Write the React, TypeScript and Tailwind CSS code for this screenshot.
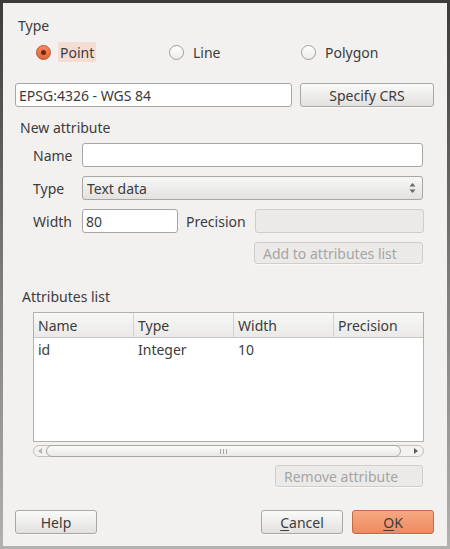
const font = { fontFamily: "'Noto Sans', 'DejaVu Sans', sans-serif" };

function Radio({ label, checked }: { label: string; checked?: boolean }) {
  return (
    <div className="flex items-center">
      {checked ? (
        <span className="flex h-[15px] w-[15px] items-center justify-center rounded-full border border-[#b8532c] bg-linear-to-b from-[#f48a5c] to-[#e5643a]">
          <span className="h-[5px] w-[5px] rounded-full bg-[#6b2a12]" />
        </span>
      ) : (
        <span className="h-[15px] w-[15px] rounded-full border border-[#a19f9b] bg-linear-to-b from-[#ffffff] to-[#ecebea]" />
      )}
      <span
        className={
          "ml-[7px] flex h-[20px] items-center px-[2px] " +
          (checked ? "bg-[#f5ddd3]" : "")
        }
      >
        {label}
      </span>
    </div>
  );
}

function Button({
  children,
  className = "",
  disabled,
  primary,
}: {
  children: React.ReactNode;
  className?: string;
  disabled?: boolean;
  primary?: boolean;
}) {
  let look =
    "justify-center border-[#a9a7a3] bg-linear-to-b from-[#fafaf9] to-[#e2e1df] text-[#3c3c3c]";
  if (disabled) look = "justify-start pl-[8px] border-[#d0cecb] bg-[#ebeae9] text-[#a6a5a2]";
  if (primary)
    look = "justify-center border-[#c66a45] bg-linear-to-b from-[#f6a882] to-[#ee8a60] text-[#3c3c3c]";
  return (
    <div
      className={
        "flex items-center rounded-[3px] border shadow-[0_1px_0_rgba(255,255,255,0.6)] " +
        look +
        " " +
        className
      }
    >
      {children}
    </div>
  );
}

function Input({ value, className = "", disabled }: { value?: string; className?: string; disabled?: boolean }) {
  return (
    <div
      className={
        "flex h-[24px] items-center rounded-[3px] border px-[3px] " +
        (disabled
          ? "border-[#cfcdca] bg-[#ebeae9]"
          : "border-[#a9a7a3] bg-white") +
        " " +
        className
      }
    >
      {value}
    </div>
  );
}

export default function App() {
  return (
    <div
      className="h-[549px] w-[450px] bg-linear-to-b from-[#3c3b37] via-[#7d7b77] to-[#b3b1ad] p-[3px] text-[14px] text-[#3c3c3c]"
      style={font}
    >
      <div className="flex h-full flex-col bg-[#f2f1f0] pl-[12px] pr-[13px]">
        {/* Type */}
        <div className="mt-[14px] ml-[3px] h-[18px] leading-[18px]">Type</div>
        <div className="mt-[7px] flex h-[20px] items-center">
          <div className="ml-[21px] w-[133px]">
            <Radio label="Point" checked />
          </div>
          <div className="w-[132px]">
            <Radio label="Line" />
          </div>
          <Radio label="Polygon" />
        </div>

        {/* CRS */}
        <div className="mt-[21px] flex h-[24px] gap-[8px]">
          <Input value="EPSG:4326 - WGS 84" className="w-[277px]" />
          <Button className="h-[24px] w-[134px]">Specify CRS</Button>
        </div>

        {/* New attribute */}
        <div className="mt-[12px] ml-[5px] h-[18px] leading-[18px]">New attribute</div>
        <div className="mt-[6px] flex h-[24px] items-center">
          <div className="ml-[18px] w-[49px]">Name</div>
          <Input className="w-[341px]" />
        </div>
        <div className="mt-[9px] flex h-[24px] items-center">
          <div className="ml-[18px] w-[49px]">Type</div>
          <div className="flex h-[24px] w-[341px] items-center justify-between rounded-[3px] border border-[#a9a7a3] bg-linear-to-b from-[#f7f7f6] to-[#e3e2e0] pl-[4px] pr-[6px]">
            <span>Text data</span>
            <svg width="7" height="12" viewBox="0 0 7 12">
              <path d="M3.5 1 L6.5 4.5 H0.5 Z" fill="#6a6966" />
              <path d="M3.5 11 L6.5 7.5 H0.5 Z" fill="#6a6966" />
            </svg>
          </div>
        </div>
        <div className="mt-[9px] flex h-[24px] items-center">
          <div className="ml-[18px] w-[49px]">Width</div>
          <Input value="80" className="w-[96px]" />
          <div className="ml-[8px] w-[69px]">Precision</div>
          <Input disabled className="w-[169px]" />
        </div>
        <div className="mt-[9px] flex justify-end pr-[11px]">
          <Button disabled className="h-[22px] w-[169px]">
            Add to attributes list
          </Button>
        </div>

        {/* Attributes list */}
        <div className="mt-[24px] ml-[7px] h-[18px] leading-[18px]">Attributes list</div>
        <div className="mt-[6px] ml-[18px] mr-[10px] flex h-[130px] flex-col border border-[#b3b1ad] bg-white">
          <div className="flex h-[25px] border-b border-[#c9c7c3] bg-linear-to-b from-[#f8f8f7] to-[#eae9e7]">
            {["Name", "Type", "Width", "Precision"].map((h, i) => (
              <div
                key={h}
                className={
                  "flex items-center px-[4px] " +
                  (i < 3 ? "w-[100px] border-r border-[#d4d2ce]" : "flex-1")
                }
              >
                {h}
              </div>
            ))}
          </div>
          <div className="flex h-[22px] items-center">
            <div className="w-[100px] px-[4px]">id</div>
            <div className="w-[100px] px-[4px]">Integer</div>
            <div className="w-[100px] px-[4px]">10</div>
          </div>
        </div>

        {/* scrollbar */}
        <div className="mt-[3px] ml-[18px] mr-[10px] flex h-[12px] items-center rounded-full border border-[#c3c1bd] bg-[#f3f2f1]">
          <div className="flex w-[12px] justify-center">
            <svg width="4" height="6" viewBox="0 0 4 6">
              <path d="M0 3 L4 0 V6 Z" fill="#b8b6b2" />
            </svg>
          </div>
          <div className="flex h-[12px] w-[355px] items-center justify-center rounded-full border border-[#a9a7a3] bg-linear-to-b from-[#fcfcfb] to-[#e9e8e6]">
            <svg width="7" height="5" viewBox="0 0 7 5">
              <path d="M0.5 0 V5 M3.5 0 V5 M6.5 0 V5" stroke="#a9a7a3" strokeWidth="1" />
            </svg>
          </div>
          <div className="flex flex-1 justify-end pr-[5px]">
            <svg width="4" height="6" viewBox="0 0 4 6">
              <path d="M4 3 L0 0 V6 Z" fill="#5e5d5a" />
            </svg>
          </div>
        </div>

        <div className="mt-[8px] flex justify-end pr-[11px]">
          <Button disabled className="h-[22px] w-[148px]">
            Remove attribute
          </Button>
        </div>

        {/* bottom buttons */}
        <div className="mt-[23px] flex h-[24px]">
          <Button className="h-[24px] w-[82px]">Help</Button>
          <div className="flex-1" />
          <Button className="h-[24px] w-[82px]">
            <span className="underline underline-offset-2">C</span>ancel
          </Button>
          <Button primary className="ml-[9px] h-[24px] w-[82px]">
            <span className="underline underline-offset-2">O</span>K
          </Button>
        </div>
      </div>
    </div>
  );
}
